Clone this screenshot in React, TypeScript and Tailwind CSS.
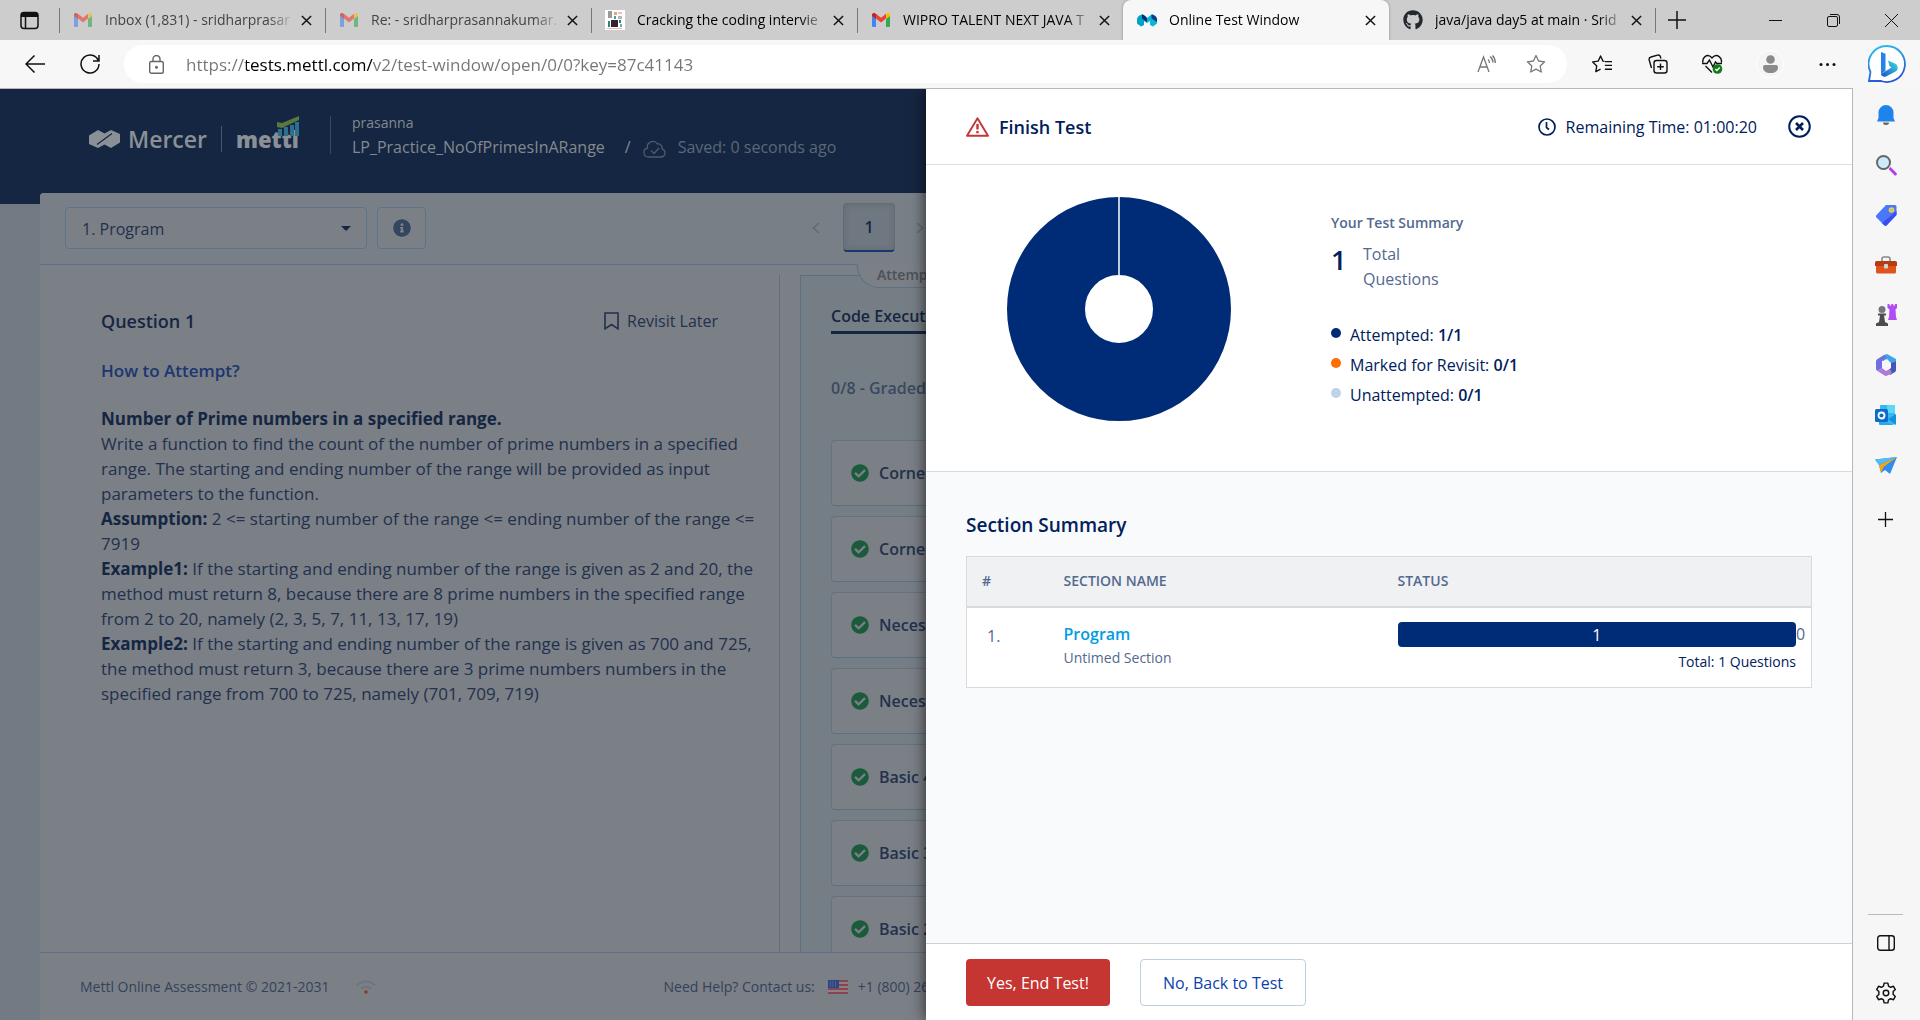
import type { ReactNode } from "react";
import {
  FaCheckCircle,
  FaGithub,
  FaInfoCircle,
} from "react-icons/fa";

type Box = { children?: ReactNode; className?: string; label?: string };

function IconButton({ children, className = "", label }: Box) {
  return (
    <button type="button" aria-label={label} className={`flex shrink-0 items-center justify-center ${className}`}>
      {children}
    </button>
  );
}

/* ---------- tab icons ---------- */

function GmailIcon() {
  return (
    <svg viewBox="0 0 18 14" className="h-[14px] w-[18px] shrink-0">
      <path d="M0 2.5V13a1 1 0 0 0 1 1h3V5.5L0 2.5Z" fill="#4285f4" />
      <path d="M14 5.5V14h3a1 1 0 0 0 1-1V2.5l-4 3Z" fill="#34a853" />
      <path d="M4 5.6V.8l5 3.9L14 .8v4.8L9 9.5 4 5.6Z" fill="#ea4335" />
      <path d="M0 2v1l4 3V.9L2.9 .2C1.6-.6 0 .4 0 2Z" fill="#c5221f" />
      <path d="M18 2v1l-4 3V.9l1.1-.7C16.4-.6 18 .4 18 2Z" fill="#fbbc04" />
    </svg>
  );
}

function BookSiteIcon() {
  return (
    <svg viewBox="0 0 20 20" className="h-5 w-5 shrink-0">
      <rect width="20" height="20" fill="#fff" />
      <rect x="3" y="1" width="4" height="7" fill="#9a9a94" />
      <rect x="9" y="2" width="3" height="3" fill="#e8a08c" />
      <rect x="13" y="2" width="4" height="2" fill="#f0c4a8" />
      <rect x="9" y="6" width="2" height="3" fill="#4a9aa0" />
      <rect x="13" y="6" width="4" height="3" fill="#b9b4b0" />
      <rect x="3" y="11" width="2" height="6" fill="#2c7f86" />
      <rect x="6" y="10" width="7" height="7" fill="#35222d" />
      <rect x="14" y="10" width="2" height="3" fill="#2c7f86" />
      <rect x="15" y="14" width="2" height="3" fill="#6fb0b4" />
      <rect x="2" y="18" width="15" height="1" fill="#f4b4ac" />
    </svg>
  );
}

function MettlTabIcon() {
  return (
    <svg viewBox="0 0 20 13" className="h-[13px] w-5 shrink-0">
      <path d="M0 5.500C0 3 3 .5 5.500.5L10 4v5l-3-2v4l-3 1.500L0 9.500v-4Z" fill="#00a3c4" />
      <path d="M5 .5c2 0 5 2.500 5 4.500v3L5 4.500v-4Z" fill="#00307a" />
      <path d="M20 5.500C20 3 17 .5 14.500.5L10 4v5l3-2v4l3 1.500 4-3v-4Z" fill="#0fb4d6" />
      <path d="M14.500.5C17 .5 20 3 20 5.500V8l-5.500-3.500v-4Z" fill="#0a3f86" />
    </svg>
  );
}

function CloseGlyph({ className = "" }: Box) {
  return (
    <svg viewBox="0 0 12 12" className={className} fill="none" stroke="currentColor" strokeWidth="1.600">
      <path d="m1 1 10 10M11 1 1 11" />
    </svg>
  );
}

type TabData = { title: string; icon: ReactNode; active?: boolean; asleep?: boolean; separator?: boolean };

const tabs: TabData[] = [
  { title: "Inbox (1,831) - sridharprasar", icon: <GmailIcon />, asleep: true, separator: true },
  { title: "Re: - sridharprasannakumar.", icon: <GmailIcon />, asleep: true, separator: true },
  { title: "Cracking the coding intervie", icon: <BookSiteIcon />, separator: true },
  { title: "WIPRO TALENT NEXT JAVA T", icon: <GmailIcon />, separator: true },
  { title: "Online Test Window", icon: <MettlTabIcon />, active: true },
  { title: "java/java day5 at main · Srid", icon: <FaGithub className="h-5 w-5 shrink-0 text-[#24292f]" /> },
];

function Tab({ title, icon, active, asleep, separator }: TabData) {
  return (
    <div
      className={`flex h-10 w-[266px] min-w-0 items-center ${active ? "rounded-t-lg bg-[#f7f7f7] shadow-[0_0_3px_rgba(0,0,0,0.35)]" : ""}`}
    >
      <span className={`h-[25px] w-px shrink-0 ${separator ? "bg-[#777]" : ""}`} />
      <span className={`ml-[13px] flex w-5 shrink-0 justify-center ${asleep ? "opacity-60" : ""}`}>{icon}</span>
      <span
        className={`ml-3 min-w-0 flex-1 overflow-hidden text-sm whitespace-nowrap [mask-image:linear-gradient(to_right,black_86%,transparent)] ${asleep ? "text-[#444]" : "text-black"}`}
      >
        {title}
      </span>
      <IconButton label={`Close ${title}`} className="mr-3 ml-1 h-5 w-[14px] text-[#111]">
        <CloseGlyph className="h-[11px] w-[11px]" />
      </IconButton>
    </div>
  );
}

function TabStrip() {
  return (
    <div className="flex h-10 items-center bg-[#cdcdcd] pr-[22px]">
      <IconButton label="Tab actions" className="w-[59px]">
        <svg viewBox="0 0 19 19" className="h-[19px] w-[19px]">
          <rect x="1" y="1.500" width="17" height="16" rx="3" fill="none" stroke="#111" strokeWidth="1.500" />
          <path d="M1 6V3.500a2.500 2.500 0 0 1 2.500-2.500h12A2.500 2.500 0 0 1 18 3.500V6H1Z" fill="#111" />
          <path d="M5.500 6v11" stroke="#111" strokeWidth="1.500" />
        </svg>
      </IconButton>
      {tabs.map((tab) => (
        <Tab key={tab.title} {...tab} />
      ))}
      <span className="h-[25px] w-px bg-[#777]" />
      <IconButton label="New tab" className="ml-3">
        <svg viewBox="0 0 18 18" className="h-[18px] w-[18px]" stroke="#111" strokeWidth="1.500">
          <path d="M9 0v18M0 9h18" />
        </svg>
      </IconButton>
      <div className="ml-auto flex items-center gap-[45px]">
        <IconButton label="Minimize">
          <svg viewBox="0 0 13 13" className="h-[13px] w-[13px]" stroke="#111">
            <path d="M0 6.500h13" />
          </svg>
        </IconButton>
        <IconButton label="Restore">
          <svg viewBox="0 0 13 13" className="h-[13px] w-[13px]" stroke="#111" fill="none">
            <rect x=".5" y="2.500" width="10" height="10" rx="1.500" />
            <path d="M3 .5h7a2.500 2.500 0 0 1 2.500 2.500v7" />
          </svg>
        </IconButton>
        <IconButton label="Close window">
          <svg viewBox="0 0 13 13" className="h-[13px] w-[13px]" stroke="#111">
            <path d="m0 0 13 13M13 0 0 13" />
          </svg>
        </IconButton>
      </div>
    </div>
  );
}

/* ---------- address bar ---------- */

const starPath = "M10 1.500l2.600 5.500 6 .8-4.400 4.200 1.100 6-5.300-2.900-5.300 2.900 1.100-6L1.400 7.800l6-.8L10 1.500Z";

function BingIcon() {
  return (
    <svg viewBox="0 0 38 38" className="h-[38px] w-[38px]">
      <defs>
        <linearGradient id="bing-ring" x1="0" y1="0" x2="0.300" y2="1">
          <stop offset="0" stopColor="#2fc5ee" />
          <stop offset="1" stopColor="#2356d8" />
        </linearGradient>
        <linearGradient id="bing-b" x1="0" y1="0" x2="1" y2="1">
          <stop offset="0" stopColor="#2f7df0" />
          <stop offset="1" stopColor="#1a8be0" />
        </linearGradient>
        <linearGradient id="bing-c" x1="0" y1="1" x2="1" y2="0">
          <stop offset="0" stopColor="#1d4fd0" />
          <stop offset="1" stopColor="#3be0d8" />
        </linearGradient>
      </defs>
      <path d="M19 1a18 18 0 1 1-6 35H1l1.500-9A18 18 0 0 1 19 1Z" fill="#fff" stroke="url(#bing-ring)" strokeWidth="1.800" />
      <path d="m13 7 4.500 1.800V26L13 29V7Z" fill="url(#bing-b)" />
      <path d="M20 15.500 28 19a5 5 0 0 1 .5 7L18 31.500c-3 .8-5-1-5-2.500l10.500-6.500-2-1.500L20 15.500Z" fill="url(#bing-c)" />
    </svg>
  );
}

function AddressBar() {
  return (
    <div className="flex h-12 items-center bg-[#f7f7f7] pr-[14px] pl-[25px]">
      <IconButton label="Back">
        <svg viewBox="0 0 20 18" className="h-[18px] w-5" fill="none" stroke="#111" strokeWidth="1.500">
          <path d="M20 9H1M9.500.5 1 9l8.500 8.500" />
        </svg>
      </IconButton>
      <IconButton label="Refresh" className="ml-[35px]">
        <svg viewBox="0 0 20 20" className="h-5 w-5" fill="none" stroke="#111" strokeWidth="1.500">
          <path d="M18.500 7A9 9 0 1 0 19 10M19 1v6h-6" />
        </svg>
      </IconButton>
      <div className="ml-6 flex h-[38px] min-w-0 flex-1 items-center rounded-full bg-white pr-[21px] pl-[25px]">
        <svg viewBox="0 0 15 19" className="h-[19px] w-[15px] shrink-0" fill="none" stroke="#666" strokeWidth="1.400">
          <rect x=".7" y="6.500" width="13.600" height="11.800" rx="1.800" />
          <path d="M4 6.500V4a3.500 3.500 0 0 1 7 0v2.500" />
          <circle cx="7.500" cy="12.300" r=".8" fill="#666" />
        </svg>
        <input
          type="text"
          aria-label="Address"
          defaultValue="https://tests.mettl.com/v2/test-window/open/0/0?key=87c41143"
          className="ml-[22px] h-8 min-w-0 flex-1 bg-[linear-gradient(to_right,#757575_60px,#000_60px,#000_187px,#757575_187px)] bg-clip-text text-[17px] text-transparent outline-none"
        />
        <IconButton label="Read aloud">
          <svg viewBox="0 0 19 18" className="h-[18px] w-[19px]" fill="none" stroke="#777" strokeWidth="1.300">
            <path d="m1 17 5.500-15L12 17M3 12h7M11 4.500c1 .8 1.500 2 1.500 3.500M13 1.500c2 1.500 3 3.500 3 6" />
            <path d="M15.500.5C17.500 2.500 18.300 5 18.300 8" />
          </svg>
        </IconButton>
        <IconButton label="Add to favorites" className="ml-[30px]">
          <svg viewBox="0 0 20 20" className="h-5 w-5" fill="none" stroke="#777" strokeWidth="1.300" strokeLinejoin="round">
            <path d={starPath} />
          </svg>
        </IconButton>
      </div>
      <div className="ml-[25px] flex items-center">
        <IconButton label="Favorites" className="w-5">
          <svg viewBox="0 0 21 20" className="h-5 w-[21px]" fill="none" stroke="#111" strokeWidth="1.400" strokeLinejoin="round">
            <path d="M13 7.300 11.500 7 9 1.500 6.500 7l-5.800.8 4.300 4.200-1 6L9 15.300M13.500 7.500H21M13.500 11.500H21M13.500 15.500H21" />
          </svg>
        </IconButton>
        <IconButton label="Collections" className="ml-9 w-5">
          <svg viewBox="0 0 20 20" className="h-5 w-5" fill="none" stroke="#111" strokeWidth="1.400">
            <rect x="6" y="6.500" width="13" height="12.500" rx="2.500" />
            <path d="M12.500 9.500v6.500M9.200 12.700h6.600M3.500 14 1.200 6A2.500 2.500 0 0 1 3 3l6.500-1.900A2.500 2.500 0 0 1 12.500 3l.4 1.500" />
          </svg>
        </IconButton>
        <IconButton label="Browser essentials" className="ml-[34px] w-[21px]">
          <svg viewBox="0 0 21 20" className="h-5 w-[21px]" fill="none" stroke="#111" strokeWidth="1.400">
            <path d="M1 8.500C-.2 3.500 5-.5 9 3l1 1 1-1c4-3.500 9.500.5 8.300 5.500M3.500 12l6.500 6.500M0 9.500h5l2.500-3.500 3.500 7L13.500 8l1.500 1.500h5" />
            <circle cx="15.500" cy="15" r="4.800" fill="#0f7b17" stroke="none" />
            <path d="m13.300 15 1.600 1.600 2.800-3" stroke="#fff" />
          </svg>
        </IconButton>
        <IconButton label="Profile" className="ml-[33px] h-7 w-7 rounded-full border border-white bg-[#f4f4f4]">
          <svg viewBox="0 0 15 18" className="h-[18px] w-[15px]" fill="#8a8a8a">
            <circle cx="7.500" cy="4.500" r="4.300" />
            <path d="M0 12a2 2 0 0 1 2-2h11a2 2 0 0 1 2 2c0 4-3 6-7.500 6S0 16 0 12Z" />
          </svg>
        </IconButton>
        <IconButton label="Settings and more" className="ml-[35px]">
          <svg viewBox="0 0 17 5" className="h-[5px] w-[17px]" fill="#111">
            <circle cx="2" cy="2.500" r="1.500" />
            <circle cx="8.500" cy="2.500" r="1.500" />
            <circle cx="15" cy="2.500" r="1.500" />
          </svg>
        </IconButton>
        <IconButton label="Discover" className="ml-8">
          <BingIcon />
        </IconButton>
      </div>
    </div>
  );
}

/* ---------- browser side bar ---------- */

const sideIcons: { label: string; art: ReactNode }[] = [
  {
    label: "Notifications",
    art: (
      <>
        <path d="M2 17.500 3.500 14V8.500a7.500 7.500 0 0 1 15 0V14L20 17.500H2Z" fill="#1f83ec" />
        <path d="M8 18.500h6a3 2.500 0 0 1-6 0Z" fill="#666" />
      </>
    ),
  },
  {
    label: "Search",
    art: (
      <>
        <path d="m13.500 15 2-2 6 6a1.500 1.500 0 0 1-2 2.200l-6-6.200Z" fill="#b83bf0" />
        <circle cx="8.500" cy="8.500" r="6.500" fill="#cdeafb" stroke="#666" strokeWidth="2" />
      </>
    ),
  },
  {
    label: "Shopping",
    art: (
      <>
        <path d="M11 1h9a1.500 1.500 0 0 1 1.500 1.500V11L12 21a2 2 0 0 1-3 0l-7.500-7.500a2 2 0 0 1 0-2.500L11 1Z" fill="#4a78fa" />
        <path d="M21.500 7v4L12 21a2 2 0 0 1-3 0l-2-2L21.500 7Z" fill="#3a4df0" />
        <circle cx="16.500" cy="6" r="2" fill="#9ab0ff" stroke="#f6d32b" strokeWidth="1.600" />
      </>
    ),
  },
  {
    label: "Tools",
    art: (
      <>
        <path d="M7 7V5a2 2 0 0 1 2-2h4a2 2 0 0 1 2 2v2" fill="none" stroke="#888" strokeWidth="1.600" />
        <rect x="1" y="9" width="20" height="10.500" rx="1.500" fill="#e0531c" />
        <path d="M0 8.500A1.500 1.500 0 0 1 1.500 7h19A1.500 1.500 0 0 1 22 8.500V12H0V8.500Z" fill="#b63d12" />
        <rect x="9" y="10" width="4" height="4.500" rx="1" fill="#d4d4d4" />
      </>
    ),
  },
  {
    label: "Games",
    art: (
      <>
        <path d="M12.500 0h2v1.500h1.800V0h2v1.500H20V0h2v4l-1.500 1.500.5 7.500 1 3h-9l1-3 .5-7.500-2-1.500V0Z" fill="#b44cf5" />
        <circle cx="7" cy="5.500" r="3.500" fill="#777" />
        <path d="M3 9.500h8v2H9l1 6.500 3 1.500V22H1v-2.500L4 18l1-6.500H3v-2Z" fill="#4c4c4c" />
      </>
    ),
  },
  {
    label: "Microsoft 365",
    art: (
      <>
        <path d="m9 1 3-1 9 5v6l-5-2-4-4-4 2-2-1 3-5Z" fill="#3fa6ea" />
        <path d="M9 1 2.500 5A3 3 0 0 0 1 7.500v7A3 3 0 0 0 2.500 17L7 14V7l5-4-3-2Z" fill="#6f6fe0" />
        <path d="M21 7.500V16a2 2 0 0 1-1 2l-5 3-3-4 4-3V9l5-1.500Z" fill="#4456b8" />
        <path d="m2.500 17 7 4.500a3 3 0 0 0 3 0L17 19l-2-4-4 2-4-3-4.500 3Z" fill="#b07ad8" />
      </>
    ),
  },
  {
    label: "Outlook",
    art: (
      <>
        <rect x="5" y="1" width="15" height="19" rx="1" fill="#35b8f1" />
        <path d="M12 1h8v8h-8z" fill="#5fd6f8" />
        <path d="m21 10-8 5 8 6V10Z" fill="#1490df" />
        <path d="M4 20V17l17 4H5a1 1 0 0 1-1-1Z" fill="#28a8ea" />
        <rect x="0" y="5" width="13" height="13" rx="1.500" fill="#0a6cc8" />
        <circle cx="6.500" cy="11.500" r="3" fill="none" stroke="#fff" strokeWidth="1.800" />
      </>
    ),
  },
  {
    label: "Drop",
    art: (
      <>
        <path d="M0 5.500 22 3 15 20l-5-4-4 3-2-8-4-5.500Z" fill="#2d8df0" />
        <path d="M0 5.500 22 3 4 11 0 5.500Z" fill="#4fbdf8" />
        <path d="M4 11 22 3 8.500 13 6 19 4 11Z" fill="#f2a516" />
      </>
    ),
  },
];

function BrowserSideBar() {
  return (
    <aside className="flex w-[67px] shrink-0 flex-col items-center bg-[#f6f6f6] pt-[2px] pr-[2px]">
      {sideIcons.map((icon) => (
        <IconButton key={icon.label} label={icon.label} className="h-[50px] w-full">
          <svg viewBox="0 0 22 22" className="h-[22px] w-[22px]">
            {icon.art}
          </svg>
        </IconButton>
      ))}
      <IconButton label="Customize" className="mt-1 h-[50px] w-full">
        <svg viewBox="0 0 15 15" className="h-[15px] w-[15px]" stroke="#111" strokeWidth="1.300">
          <path d="M7.500 0v15M0 7.500h15" />
        </svg>
      </IconButton>
      <span className="mt-auto h-px w-[35px] bg-[#bbb]" />
      <IconButton label="Hide sidebar" className="mt-[3px] h-[50px] w-full">
        <svg viewBox="0 0 18 16" className="h-4 w-[18px]" fill="none" stroke="#111" strokeWidth="1.400">
          <rect x=".7" y=".7" width="16.600" height="14.600" rx="2.500" />
          <path d="M12 1v14" />
        </svg>
      </IconButton>
      <IconButton label="Sidebar settings" className="mb-[2px] h-[50px] w-full">
        <svg viewBox="0 0 20 20" className="h-[22px] w-[22px]" fill="none" stroke="#111" strokeWidth="1.300" strokeLinejoin="round">
          <path d="M8.300 1h3.400l.6 2.700 1.900 1.100 2.600-.9 1.700 3-2 1.800v2.600l2 1.800-1.700 3-2.600-.9-1.900 1.100-.6 2.700H8.300l-.6-2.700-1.900-1.100-2.600.9-1.700-3 2-1.800V8.700l-2-1.800 1.700-3 2.600.9 1.900-1.100L8.300 1Z" />
          <circle cx="10" cy="10" r="2.500" />
        </svg>
      </IconButton>
    </aside>
  );
}

/* ---------- test page behind the drawer ---------- */

function PageHeader() {
  return (
    <header className="flex h-[115px] items-start bg-[#152642] pt-[23px] pl-[89px] text-[#84898f]">
      <div className="flex h-[54px] items-center">
        <svg viewBox="0 0 31 18" className="h-[18px] w-[31px]" fill="#8b9096">
          <path d="M0 5.500 9 0l6.500 3.500L22 0l9 4v8.500L22 18l-6.500-3.500L9 18l-9-4V5.500Z" />
          <path d="m8 14.500 9.500-7M13.500 10.500 23 3.500" fill="none" stroke="#152642" strokeWidth="1.200" />
        </svg>
        <span className="ml-2 text-[23px] font-semibold text-[#8b9096]">Mercer</span>
        <span className="ml-[14px] h-[26px] w-px bg-[#4a566a]" />
        <span className="relative ml-[14px] text-[22px] font-extrabold text-[#8b9096]">
          mettl
          <svg viewBox="0 0 22 20" className="absolute top-[-7px] right-0 h-5 w-[22px]">
            <path d="M1 13h4v7H1zM7 11h4v9H7zM13 9h4v11h-4zM18 6h4v14h-4z" fill="#2d6f8d" />
            <path d="m0 6 5 1L22 0v4L5 12l-5-1V6Z" fill="#58783f" />
          </svg>
        </span>
      </div>
      <span className="mt-1 ml-[31px] h-[38px] w-px bg-[#3a4a58]" />
      <div className="ml-[21px] flex flex-col">
        <span className="h-[22px] text-sm leading-[22px]">prasanna</span>
        <div className="flex h-[26px] items-center text-base whitespace-nowrap">
          <span>LP_Practice_NoOfPrimesInARange</span>
          <span className="ml-5">/</span>
          <svg viewBox="0 0 23 18" className="mt-1 ml-3 h-[18px] w-[23px]" fill="none" stroke="#4d5b6f" strokeWidth="1.300">
            <path d="M5.500 17a4.500 4.500 0 0 1-1-8.900A5.500 5.500 0 0 1 14.500 4a4 4 0 0 1 4.500 4.800A4.200 4.200 0 0 1 18 17H5.500ZM8 10.500l3 3L16 8" />
          </svg>
          <span className="ml-3 text-[#5b6879]">Saved: 0 seconds ago</span>
        </div>
      </div>
    </header>
  );
}

function QuestionBar() {
  return (
    <div className="flex h-[72px] items-start border-b border-[#5b7085] bg-[#787f86] pl-[25px]">
      <div className="relative mt-[14px]">
        <select
          aria-label="Section"
          className="h-[42px] w-[302px] appearance-none rounded-[4px] border border-[#5f7388] bg-[#7b7f86] pt-[2px] pl-4 text-base text-[#22314d]"
        >
          <option>1. Program</option>
        </select>
        <svg viewBox="0 0 10 5" className="pointer-events-none absolute top-[19px] right-4 h-[5px] w-[10px]" fill="#152642">
          <path d="M0 0h10L5 5Z" />
        </svg>
      </div>
      <IconButton label="Section information" className="mt-[14px] ml-[10px] h-[42px] w-[49px] rounded-[4px] border border-[#5f7388] bg-[#7b7f86]">
        <FaInfoCircle className="h-[18px] w-[18px] text-[#33455f]" />
      </IconButton>
      <nav className="mt-[10px] ml-[386px] flex items-center">
        <IconButton label="Previous question" className="w-2">
          <svg viewBox="0 0 8 10" className="h-[10px] w-2" fill="none" stroke="#626a74" strokeWidth="1.500">
            <path d="M7 0 1.500 5 7 10" />
          </svg>
        </IconButton>
        <button
          type="button"
          className="ml-[23px] h-[49px] w-[52px] rounded-[4px] border border-b-2 border-[#636c76] border-b-[#1b3670] bg-[#6f7881] text-base font-semibold text-[#152642] shadow-[inset_0_0_6px_rgba(40,50,60,0.2)]"
        >
          1
        </button>
        <IconButton label="Next question" className="ml-[21px] w-2">
          <svg viewBox="0 0 8 10" className="h-[10px] w-2" fill="none" stroke="#626a74" strokeWidth="1.500">
            <path d="m1 0 5.500 5L1 10" />
          </svg>
        </IconButton>
      </nav>
    </div>
  );
}

const problem: { lead?: string; lines: string[] }[] = [
  { lead: "Number of Prime numbers in a specified range.", lines: [""] },
  {
    lines: [
      "Write a function to find the count of the number of prime numbers in a specified",
      "range. The starting and ending number of the range will be provided as input",
      "parameters to the function.",
    ],
  },
  { lead: "Assumption:", lines: [" 2 <= starting number of the range <= ending number of the range <=", "7919"] },
  {
    lead: "Example1:",
    lines: [
      " If the starting and ending number of the range is given as 2 and 20, the",
      "method must return 8, because there are 8 prime numbers in the specified range",
      "from 2 to 20, namely (2, 3, 5, 7, 11, 13, 17, 19)",
    ],
  },
  {
    lead: "Example2:",
    lines: [
      " If the starting and ending number of the range is given as 700 and 725,",
      "the method must return 3, because there are 3 prime numbers numbers in the",
      "specified range from 700 to 725, namely (701, 709, 719)",
    ],
  },
];

function QuestionPane() {
  return (
    <section className="mt-[10px] w-[740px] shrink-0 border-r border-[#5b7085] pt-[31px] pl-[61px]">
      <div className="flex h-[30px] items-center justify-between pr-[61px]">
        <h2 className="text-lg font-semibold text-[#152642]">Question 1</h2>
        <button type="button" className="flex items-center gap-2 text-base text-[#22314d]">
          <svg viewBox="0 0 15 18" className="h-[18px] w-[15px]" fill="none" stroke="#22314d" strokeWidth="1.600">
            <path d="M1 1h13v15.800l-6.500-4.300L1 16.800V1Z" />
          </svg>
          Revisit Later
        </button>
      </div>
      <a href="#how" className="mt-5 flex h-[30px] w-fit items-center text-[17px] font-semibold text-[#1b3670]">
        How to Attempt?
      </a>
      <div className="mt-5 text-[17px] leading-[25px] whitespace-pre text-[#22314d]">
        {problem.map((block, i) => (
          <p key={i}>
            {block.lead && <strong className="font-bold text-[#152642]">{block.lead}</strong>}
            {block.lines.map((line, j) => (
              <span key={j}>
                {j > 0 && <br />}
                {line}
              </span>
            ))}
          </p>
        ))}
      </div>
    </section>
  );
}

const testCases = ["Corner 1", "Corner 2", "Necessary 1", "Necessary 2", "Basic 4", "Basic 3", "Basic 2"];

function ResultPane() {
  return (
    <section className="relative mt-[10px] ml-5 min-w-0 flex-1 overflow-hidden border-t border-l border-[#5b7085] bg-[#767e85] pt-6 pl-[30px]">
      <h3 className="h-[34px] w-[200px] border-b-[3px] border-[#152642] text-base leading-8 font-semibold whitespace-nowrap text-[#152642]">
        Code Execution
      </h3>
      <p className="mt-[41px] h-[26px] text-base leading-[26px] font-semibold text-[#3a4961]">0/8 - Graded</p>
      <ul className="mt-[39px] flex flex-col gap-[10px]">
        {testCases.map((name) => (
          <li
            key={name}
            className="flex h-[66px] shrink-0 items-center gap-[10px] rounded-[4px] border border-[#66727e] border-b-[#5b7085] bg-[#7b7f86] pl-[19px] text-base font-semibold text-[#22314d]"
          >
            <FaCheckCircle className="h-[18px] w-[18px] text-[#1c5a3c]" />
            {name}
          </li>
        ))}
      </ul>
    </section>
  );
}

function PageFooter() {
  return (
    <footer className="flex h-[68px] shrink-0 items-center border-t border-[#5b7085] pl-10 text-sm whitespace-nowrap text-[#33425c]">
      <span>Mettl Online Assessment © 2021-2031</span>
      <svg viewBox="0 0 20 14" className="ml-[26px] h-[14px] w-5" fill="none" stroke="#6d757e" strokeWidth="2">
        <path d="M1 5.500c5-5.300 13-5.300 18 0M5 9c3-3 7-3 10 0" />
        <circle cx="10" cy="12" r="1.800" fill="#8a3a2c" stroke="none" />
      </svg>
      <span className="ml-[288px]">Need Help? Contact us:</span>
      <svg viewBox="0 0 20 14" className="mr-[10px] ml-[13px] h-[14px] w-5">
        <rect width="20" height="14" fill="#8f8085" />
        <path d="M0 1h20M0 5h20M0 9h20M0 13h20" stroke="#854552" strokeWidth="1.800" />
        <rect width="11" height="8" fill="#2d4784" />
        <path d="M2 2h7M2 4h7M2 6h7" stroke="#8791a8" strokeWidth=".7" strokeDasharray="1 1.500" />
      </svg>
      <span>+1 (800) 265-6038</span>
    </footer>
  );
}

function TestPage() {
  return (
    <div className="flex h-full flex-col overflow-hidden bg-[#727b83]">
      <PageHeader />
      <div className="relative mx-10 -mt-[11px] flex min-h-0 flex-1 flex-col overflow-hidden rounded-t-[4px] bg-[#7b7f86]">
        <QuestionBar />
        <div className="relative flex min-h-0 flex-1">
          <QuestionPane />
          <ResultPane />
          <span className="absolute top-[-1px] left-[817px] h-[24px] rounded-b-[22px] border border-t-0 border-[#5b7085] bg-[#7b7f86] px-[19px] text-sm leading-[22px] font-semibold whitespace-nowrap text-[#4b5058]">
            Attempted: 1/1
          </span>
        </div>
        <PageFooter />
      </div>
    </div>
  );
}

/* ---------- finish-test drawer ---------- */

const legend = [
  { label: "Attempted:", value: "1/1", dot: "bg-[#002c77]" },
  { label: "Marked for Revisit:", value: "0/1", dot: "bg-[#ff6f00]" },
  { label: "Unattempted:", value: "0/1", dot: "bg-[#bdd3e6]" },
];

function FinishDrawer() {
  return (
    <div
      role="dialog"
      aria-label="Finish Test"
      className="absolute inset-y-0 right-0 flex w-1/2 flex-col bg-[#f9fafc] text-base text-[#00205b] shadow-[0_0_14px_rgba(0,0,0,0.7)]"
    >
      <div className="flex h-[76px] shrink-0 items-center border-b border-[#ddd] bg-white px-10">
        <svg viewBox="0 0 23 20" className="h-5 w-[23px]" fill="none" stroke="#c53532" strokeWidth="1.900" strokeLinejoin="round">
          <path d="M11.500 1.200 22 18.800H1L11.500 1.200Z" />
          <path d="M11.500 7v5.500M11.500 14v2.300" strokeWidth="2.400" />
        </svg>
        <h1 className="ml-[10px] text-lg font-semibold">Finish Test</h1>
        <svg viewBox="0 0 18 18" className="ml-auto h-[18px] w-[18px]" fill="none" stroke="#00205b" strokeWidth="1.700">
          <circle cx="9" cy="9" r="8" />
          <path d="M8.500 4v5.500l2.500 2" />
        </svg>
        <span className="ml-[10px]">Remaining Time: 01:00:20</span>
        <IconButton label="Close" className="mr-px ml-[31px]">
          <svg viewBox="0 0 23 23" className="h-[23px] w-[23px]" fill="none" stroke="#00205b">
            <circle cx="11.500" cy="11.500" r="10.300" strokeWidth="2" />
            <path d="m8 8 7 7M15 8l-7 7" strokeWidth="2.600" />
          </svg>
        </IconButton>
      </div>

      <div className="flex h-[307px] shrink-0 items-start border-b border-[#d8dadd] bg-white">
        <svg viewBox="0 0 224 224" className="mt-8 ml-[81px] h-[224px] w-[224px]">
          <circle cx="112" cy="112" r="73" fill="none" stroke="#002c77" strokeWidth="78" />
          <path d="M112 0v78" stroke="#fff" strokeWidth="1.500" />
        </svg>
        <div className="mt-[47px] ml-[100px]">
          <h2 className="h-[22px] text-sm leading-[22px] font-semibold text-[#53698f]">Your Test Summary</h2>
          <div className="mt-2 flex items-start">
            <span className="w-8 text-[27px] leading-9 font-semibold">1</span>
            <span className="w-[90px] leading-[25px] text-[#53698f]">Total Questions</span>
          </div>
          <ul className="mt-7">
            {legend.map((item) => (
              <li key={item.label} className="flex h-[30px] items-center">
                <span className={`mb-1 mr-[9px] h-[10px] w-[10px] rounded-full ${item.dot}`} />
                <span>
                  {item.label} <b className="font-semibold">{item.value}</b>
                </span>
              </li>
            ))}
          </ul>
        </div>
      </div>

      <div className="min-h-0 flex-1 px-10 pt-10">
        <h2 className="h-7 text-[19px] leading-[26px] font-semibold">Section Summary</h2>
        <table className="mt-4 w-full table-fixed border-collapse border border-[#d8dadd] bg-white text-left">
          <thead>
            <tr className="h-[50px] border-b-2 border-[#d8dadd] bg-[#f0f1f3] text-sm text-[#53698f]">
              <th className="w-[82px] pl-[15px] font-semibold">#</th>
              <th className="w-[334px] pl-[15px] font-semibold">SECTION NAME</th>
              <th className="pl-[15px] font-semibold">STATUS</th>
            </tr>
          </thead>
          <tbody>
            <tr className="h-[81px] align-top">
              <td className="pt-4 pl-[20px] text-[#53698f]">1.</td>
              <td className="pt-[14px] pl-[15px]">
                <a href="#program" className="block h-6 leading-6 font-semibold text-[#009de0]">
                  Program
                </a>
                <span className="block h-6 text-sm leading-6 text-[#53698f]">Untimed Section</span>
              </td>
              <td className="px-[15px] pt-[14px]">
                <div className="flex h-[25px] items-center">
                  <span className="h-[25px] w-full shrink-0 rounded-[4px] bg-[#002c77] text-center leading-[27px] text-white">1</span>
                  <span className="text-[#53698f]">0</span>
                </div>
                <p className="mt-1 h-[22px] text-right text-sm leading-[22px]">Total: 1 Questions</p>
              </td>
            </tr>
          </tbody>
        </table>
      </div>

      <div className="flex h-[77px] shrink-0 items-start border-t border-[#cfd2d5] bg-white pt-[15px] pl-10">
        <button type="button" className="h-[47px] w-36 rounded-[4px] bg-[#c53532] text-white">
          Yes, End Test!
        </button>
        <button type="button" className="ml-[30px] h-[47px] w-[166px] rounded-[4px] border border-[#bdd0e0] bg-white text-[#0b3fae]">
          No, Back to Test
        </button>
      </div>
    </div>
  );
}

export default function App() {
  return (
    <div className="flex h-screen flex-col overflow-hidden bg-[#f7f7f7] font-['Open_Sans',sans-serif]">
      <TabStrip />
      <AddressBar />
      <div className="flex min-h-0 flex-1">
        <main className="relative min-w-0 flex-1 overflow-hidden border-t border-r border-[#b8b8b8]">
          <TestPage />
          <FinishDrawer />
        </main>
        <BrowserSideBar />
      </div>
    </div>
  );
}
